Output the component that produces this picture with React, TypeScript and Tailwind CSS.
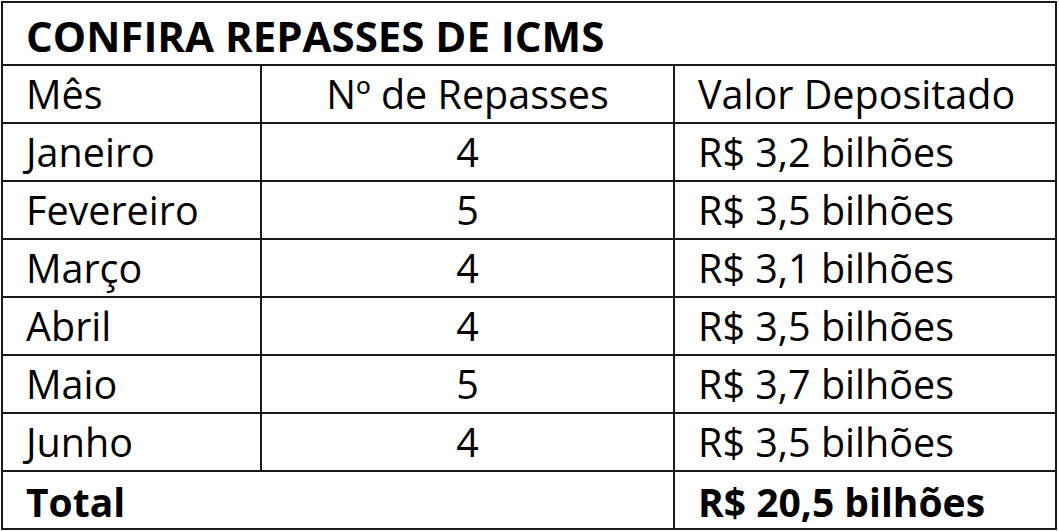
import React from 'react';

interface Repasse {
    mes: string;
    qtd: number;
    valor: string;
}

const repasses: Repasse[] = [
    { mes: 'Janeiro', qtd: 4, valor: 'R$ 3,2 bilhões' },
    { mes: 'Fevereiro', qtd: 5, valor: 'R$ 3,5 bilhões' },
    { mes: 'Março', qtd: 4, valor: 'R$ 3,1 bilhões' },
    { mes: 'Abril', qtd: 4, valor: 'R$ 3,5 bilhões' },
    { mes: 'Maio', qtd: 5, valor: 'R$ 3,7 bilhões' },
    { mes: 'Junho', qtd: 4, valor: 'R$ 3,5 bilhões' },
];

const cell = 'border-2 border-[#1a1a1a] p-0 align-middle';

const App: React.FC = () => {
    return (
        <div className="w-[1059px] h-[531px] bg-white pt-[1px] pl-[1px] text-black font-['Open_Sans',sans-serif]">
            <table className="border-collapse table-fixed w-[1056px]">
                <colgroup>
                    <col className="w-[259px]" />
                    <col className="w-[413px]" />
                    <col />
                </colgroup>
                <tbody className="text-[39.5px] leading-none">
                    <tr className="h-[63px]">
                        <td colSpan={3} className={`${cell} pl-[23px] pt-[4px] font-bold text-[42px]`}>CONFIRA REPASSES DE ICMS</td>
                    </tr>
                    <tr className="h-[58px]">
                        <td className={`${cell} pl-[23px] pt-[2px]`}>Mês</td>
                        <td className={`${cell} text-center pt-[2px]`}>Nº de Repasses</td>
                        <td className={`${cell} pl-[23px] pt-[2px]`}>Valor Depositado</td>
                    </tr>
                    {repasses.map((r) => (
                        <tr key={r.mes} className="h-[58px]">
                            <td className={`${cell} pl-[23px] pt-[2px]`}>{r.mes}</td>
                            <td className={`${cell} text-center pt-[2px]`}>{r.qtd}</td>
                            <td className={`${cell} pl-[23px] pt-[2px]`}>{r.valor}</td>
                        </tr>
                    ))}
                    {/* linha de total sem divisória entre as duas primeiras colunas */}
                    <tr className="h-[58px] font-bold text-[39px]">
                        <td colSpan={2} className={`${cell} pl-[23px] pt-[2px]`}>Total</td>
                        <td className={`${cell} pl-[23px] pt-[2px]`}>R$ 20,5 bilhões</td>
                    </tr>
                </tbody>
            </table>
        </div>
    );
};

export default App;
